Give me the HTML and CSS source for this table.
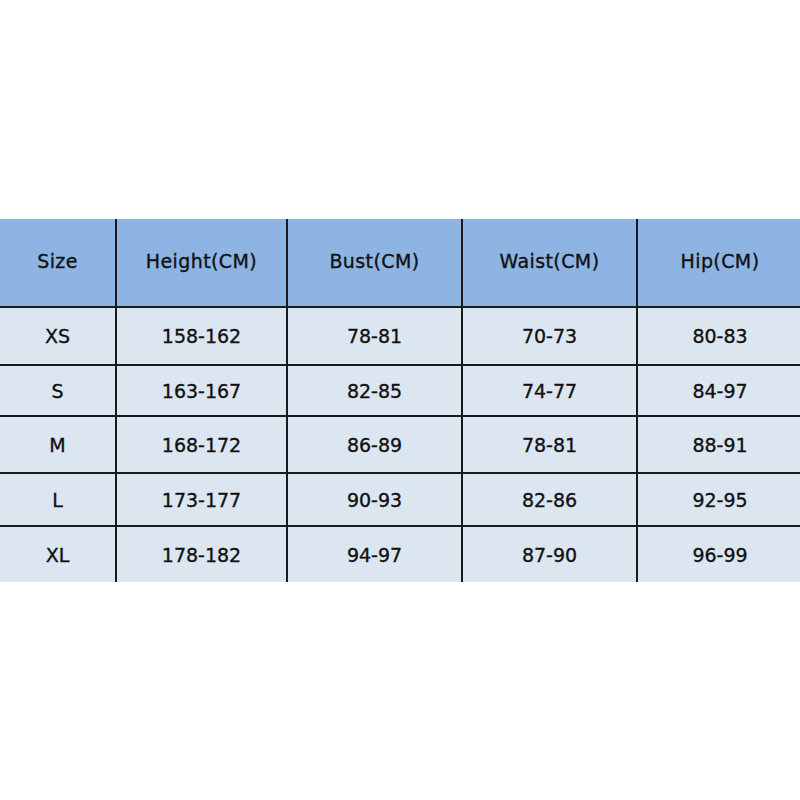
FILE: index.html
```html
<!DOCTYPE html>
<html>
<head>
<meta charset="utf-8">
<link rel="stylesheet" href="styles.css">
</head>
<body>
<div class="page">
  <div class="chart">
    <div class="cell head">Size</div>
    <div class="cell head">Height(CM)</div>
    <div class="cell head">Bust(CM)</div>
    <div class="cell head">Waist(CM)</div>
    <div class="cell head">Hip(CM)</div>

    <div class="cell">XS</div>
    <div class="cell">158-162</div>
    <div class="cell">78-81</div>
    <div class="cell">70-73</div>
    <div class="cell">80-83</div>

    <div class="cell">S</div>
    <div class="cell">163-167</div>
    <div class="cell">82-85</div>
    <div class="cell">74-77</div>
    <div class="cell">84-97</div>

    <div class="cell">M</div>
    <div class="cell">168-172</div>
    <div class="cell">86-89</div>
    <div class="cell">78-81</div>
    <div class="cell">88-91</div>

    <div class="cell">L</div>
    <div class="cell">173-177</div>
    <div class="cell">90-93</div>
    <div class="cell">82-86</div>
    <div class="cell">92-95</div>

    <div class="cell">XL</div>
    <div class="cell">178-182</div>
    <div class="cell">94-97</div>
    <div class="cell">87-90</div>
    <div class="cell">96-99</div>
  </div>
</div>
</body>
</html>
```

FILE: styles.css
```css
html, body {
  margin: 0;
  padding: 0;
  background: #ffffff;
}

.page {
  width: 800px;
  height: 800px;
  padding-top: 219px;
  box-sizing: border-box;
}

.chart {
  display: grid;
  grid-template-columns: 115px 169px 173px 173px 164px;
  grid-template-rows: 87px 56px 49px 55px 51px 55px;
  gap: 2px;
  background: #1a1a1a;
  width: 800px;
}

.cell {
  display: flex;
  align-items: center;
  justify-content: center;
  background: #dce6f1;
  font-family: "DejaVu Sans", sans-serif;
  font-size: 19px;
  color: #111111;
  -webkit-text-stroke: 0.35px #111111;
}

.cell.head {
  background: #8db4e2;
  padding-bottom: 4px;
  letter-spacing: 0.4px;
}
```
